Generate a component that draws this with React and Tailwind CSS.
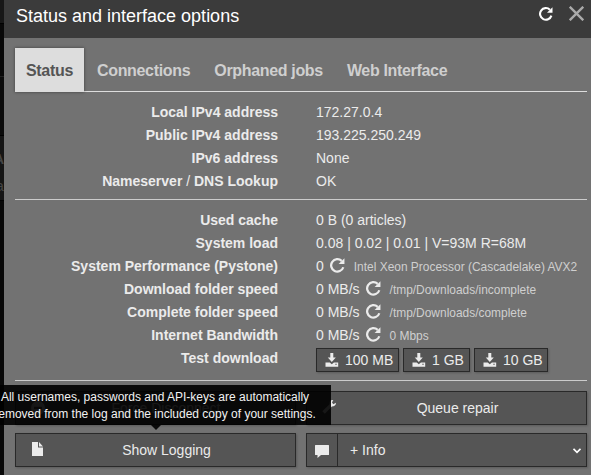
import React from "react";

function Reload({ className = "" }) {
  return (
    <svg viewBox="0 0 14 14" className={className} fill="none">
      <path d="M12.4 8.6A5.8 5.8 0 1 1 10.900 2.700" stroke="currentColor" strokeWidth="2.1" />
      <path d="M13.5 0.2V5.700H8z" fill="currentColor" />
    </svg>
  );
}

function DownloadIcon() {
  return (
    <svg viewBox="0 0 14 14" className="h-[14px] w-[14px] shrink-0" fill="currentColor">
      <path d="M5.3 0h3v4.5h2.5L6.8 9 2.8 4.500h2.500z" />
      <path fillRule="evenodd" d="M.5 9.500h4.200L6.800 11.300 8.900 9.500h4.300V13.800H.500zM10.300 10.700v1.100h1.400v-1.100z" />
    </svg>
  );
}

function Row({ label, children }) {
  return (
    <div className="flex h-[23px] items-center">
      <div className="w-[263px] text-right font-bold">{label}</div>
      <div className="ml-[38px] flex items-center whitespace-nowrap">{children}</div>
    </div>
  );
}

function SpeedRow({ label, value, note }) {
  return (
    <Row label={label}>
      <span>{value}</span>
      <Reload className="ml-[6px] mr-[9px] h-[15px] w-[15px]" />
      <span className="mt-[2px] text-[11.95px] text-[#cfcfcf]">{note}</span>
    </Row>
  );
}

const button = "border border-[#292929] bg-[#555] shadow-[1px_1px_2px_rgba(0,0,0,0.2)]";

export default function App() {
  return (
    <div className="relative flex h-[475px] w-[591px] overflow-hidden bg-[#727272] font-['Liberation_Sans',Arial,sans-serif] text-[14px] leading-[20px] text-[#ebebeb]">
      <div className="relative h-full w-[4px] shrink-0 overflow-hidden bg-[#080808]">
        <div className="h-[24px] border-b border-black bg-[#171717]" />
        <div className="mt-[52px] h-[59px] border-t border-[#202020] bg-[#0b0b0b]" />
        <div className="h-[66px] border-y border-black bg-[#151515] text-[#454545]">
          <div className="mt-[13px] -ml-[6px] font-bold">A</div>
          <div className="mt-[7px] -ml-[4px]">a</div>
        </div>
      </div>
      <div className="flex min-w-0 grow flex-col">
        <header className="flex h-[38px] shrink-0 bg-[#3b3b3b] pl-[12px] text-white">
          <h1 className="mt-[4px] grow text-[18px] leading-[24px]">Status and interface options</h1>
          <Reload className="mt-[7px] h-[14px] w-[14px]" />
          <svg viewBox="0 0 14 14" className="mt-[6px] mr-[7px] ml-[16px] h-[15px] w-[15px] text-[#aaa]">
            <path d="M.7.7l12.600 12.600M13.300.7L.7 13.300" stroke="currentColor" strokeWidth="2.2" />
          </svg>
        </header>
        <main className="flex flex-col pr-[4px] pl-[11px]">
          <nav className="mt-[10px] flex h-[44px] border-b border-[#ddd] text-[16px] font-bold tracking-[-0.33px] text-[#cfcfcf]">
            <div className="h-[44px] w-[69px] bg-[#ddd] text-center leading-[45px] text-[#555] shadow-[0_0_3px_rgba(0,0,0,0.45)]">Status</div>
            <div className="ml-[13px] leading-[45px]">Connections</div>
            <div className="ml-[24px] leading-[45px]">Orphaned jobs</div>
            <div className="ml-[24px] leading-[45px]">Web Interface</div>
          </nav>
          <section className="mt-[8px] h-[100px] border-b border-[#ccc]">
            <Row label="Local IPv4 address">172.27.0.4</Row>
            <Row label="Public IPv4 address">193.225.250.249</Row>
            <Row label="IPv6 address">None</Row>
            <Row label={<>Nameserver <span className="font-normal">/</span> DNS Lookup</>}>OK</Row>
          </section>
          <section className="mt-[8px] h-[173px] border-b border-[#ccc]">
            <Row label="Used cache">0 B (0 articles)</Row>
            <Row label="System load">0.08 | 0.02 | 0.01 | V=93M R=68M</Row>
            <SpeedRow label="System Performance (Pystone)" value="0" note="Intel Xeon Processor (Cascadelake) AVX2" />
            <SpeedRow label="Download folder speed" value="0 MB/s" note="/tmp/Downloads/incomplete" />
            <SpeedRow label="Complete folder speed" value="0 MB/s" note="/tmp/Downloads/complete" />
            <SpeedRow label="Internet Bandwidth" value="0 MB/s" note="0 Mbps" />
            <Row label="Test download">
              <div className="mt-[4px] flex gap-[4px]">
                <button className={`${button} flex h-[24px] w-[83px] items-center gap-[6px] pl-[8px]`}><DownloadIcon />100 MB</button>
                <button className={`${button} flex h-[24px] w-[67px] items-center gap-[6px] pl-[8px]`}><DownloadIcon />1 GB</button>
                <button className={`${button} flex h-[24px] w-[74px] items-center gap-[6px] pl-[8px]`}><DownloadIcon />10 GB</button>
              </div>
            </Row>
          </section>
          <section className="mt-[10px] grid grid-cols-[281px_281px] grid-rows-[34px_34px] gap-x-[10px] gap-y-[8px]">
            <button className={`${button} flex items-center`}>
              <svg viewBox="0 0 14 14" className="ml-[15px] h-[14px] w-[14px]">
                <circle cx="7" cy="7" r="7" fill="currentColor" />
                <path d="M3 7h8" stroke="#555" strokeWidth="2.5" />
              </svg>
              <span className="grow pr-[8px] text-center">Force Disconnect</span>
            </button>
            <button className={`${button} flex items-center`}>
              <svg viewBox="0 0 14 14" className="mt-[-3px] ml-[15px] h-[14px] w-[14px]" fill="currentColor">
                <path d="M9 .3 11.300.100 10 2.500 11.300 4.300 14 2.800Q13.800 6.500 9.800 6.600L2.800 13.700.400 11.300 7.600 4.300Q7.300 1.500 9 .300z" />
              </svg>
              <span className="grow pr-[7px] text-center">Queue repair</span>
            </button>
            <button className={`${button} flex items-center`}>
              <svg viewBox="0 0 11 14" className="mt-[-2px] ml-[16px] h-[14px] w-[11px]" fill="currentColor">
                <path d="M0 0h6v5.500h5V14H0zM7 0l4 4.500H7z" />
              </svg>
              <span className="grow pr-[5px] text-center">Show Logging</span>
            </button>
            <div className={`${button} flex items-center`}>
              <div className="flex h-full w-[31px] items-center justify-center border-r border-[#292929]">
                <svg viewBox="0 0 14 13" className="mt-[3px] h-[13px] w-[14px]" fill="currentColor">
                  <path d="M.5 0h13q.5 0 .5.5v9q0 .5-.5.5H6l-3.500 3V10h-2Q0 10 0 9.500v-9Q0 0 .5 0z" />
                </svg>
              </div>
              <span className="grow pl-[12px]">+ Info</span>
              <svg viewBox="0 0 8 6" className="mt-px mr-[5px] h-[6px] w-[8px]" fill="none">
                <path d="M.5.8 4 4.300 7.500.800" stroke="white" strokeWidth="1.700" />
              </svg>
            </div>
          </section>
        </main>
      </div>
      <div className="absolute top-[385px] left-[-19px] h-[40px] w-[350px] bg-black/90 pt-[4px] pr-[2px] text-center text-[12px] leading-[17px] whitespace-nowrap text-[#f2f2f2]">
        All usernames, passwords and API-keys are automatically
        <br />
        removed from the log and the included copy of your settings.
        <div className="absolute top-[40px] left-[170px] h-0 w-0 border-x-[5px] border-t-[5px] border-x-transparent border-t-black/90" />
      </div>
    </div>
  );
}
